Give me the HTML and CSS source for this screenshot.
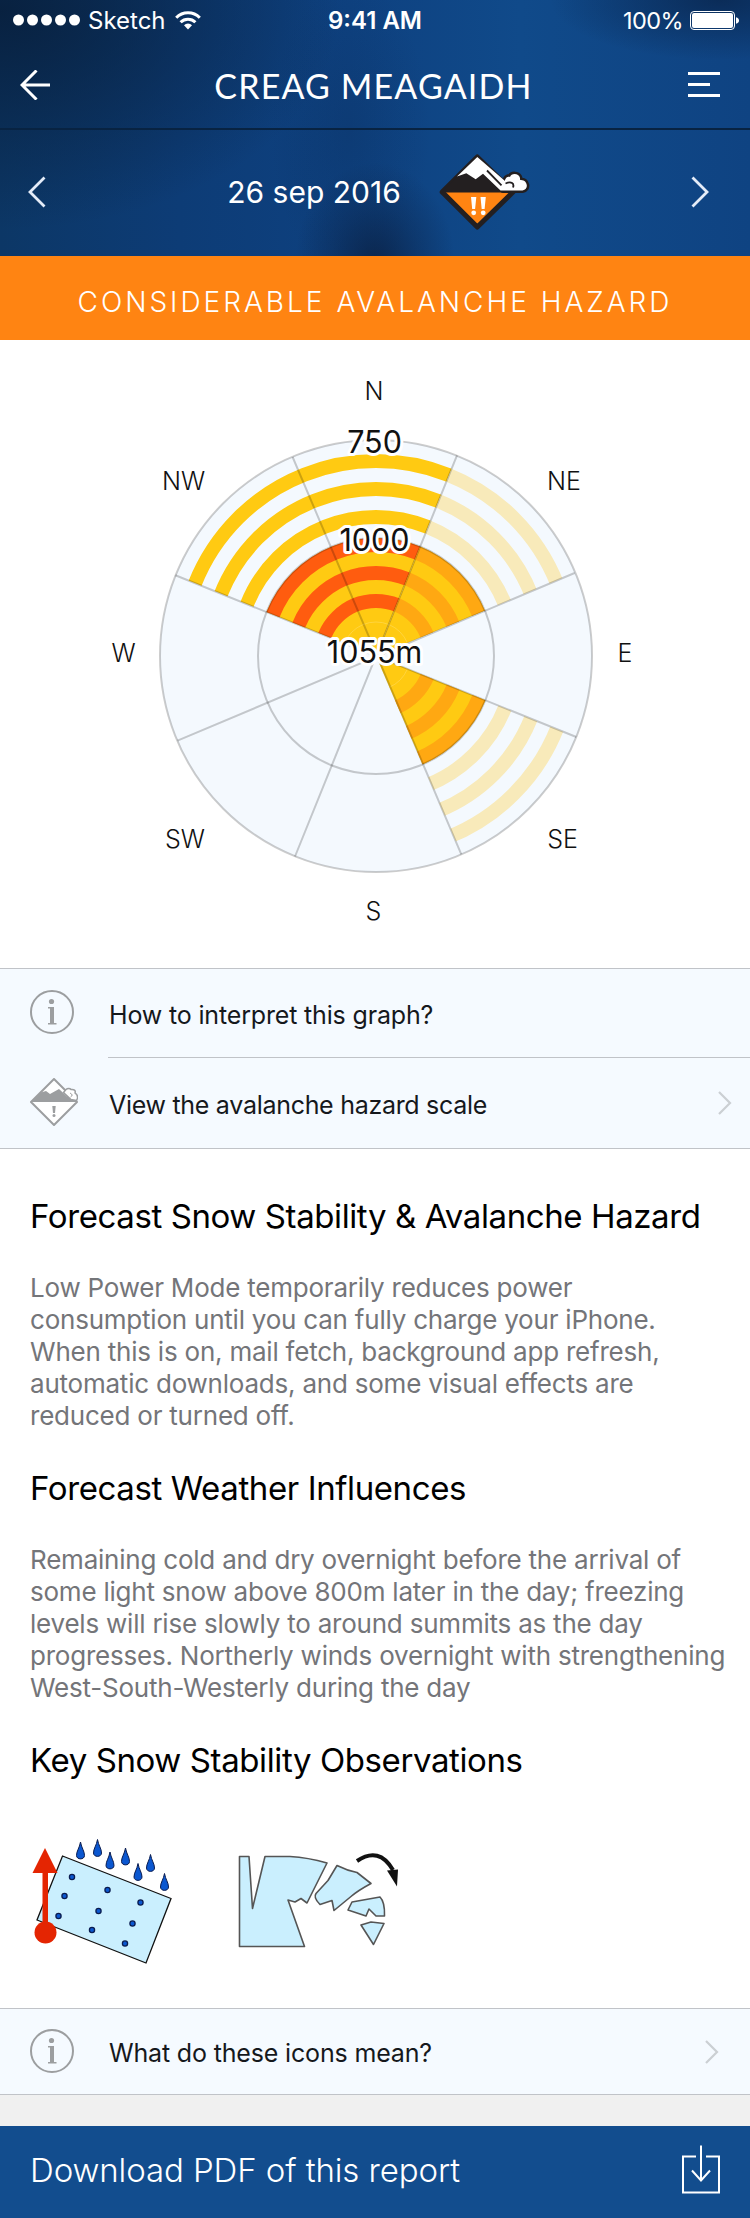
FILE: index.html
```html
<!DOCTYPE html>
<html lang="en">
<head>
<meta charset="utf-8">
<title>Creag Meagaidh</title>
<link rel="stylesheet" href="styles.css">
</head>
<body>
<div class="screen">
  <header class="top">
    <div class="status">
      <div class="status-side">
        <svg class="dots" width="68" height="16" viewBox="0 0 68 16" fill="#fff"><circle cx="5.500" cy="8" r="5.500"/><circle cx="19.500" cy="8" r="5.500"/><circle cx="33.500" cy="8" r="5.500"/><circle cx="47.500" cy="8" r="5.500"/><circle cx="61.500" cy="8" r="5.500"/></svg>
        <span class="carrier">Sketch</span>
        <svg class="wifi" width="26" height="19" viewBox="0 0 26 19"><g fill="none" stroke="#fff" stroke-width="3"><path d="M1.200 6.800a16.500 16.500 0 0 1 23.600 0"/><path d="M5.600 11.200a10.500 10.500 0 0 1 14.800 0"/></g><path d="M13 18.500l-4-4.300a5.800 5.800 0 0 1 8 0z" fill="#fff"/></svg>
      </div>
      <span class="clock">9:41 AM</span>
      <div class="status-side status-right">
        <span class="percent">100%</span>
        <svg class="battery" width="49" height="19" viewBox="0 0 49 19"><rect x=".5" y=".5" width="44" height="18" rx="3.500" fill="none" stroke="#fff"/><rect x="2" y="2" width="41" height="15" rx="2" fill="#fff"/><path d="M46 6.200q3 .8 3 3.300t-3 3.300z" fill="#fff"/></svg>
      </div>
    </div>
    <nav class="navbar">
      <svg width="30" height="30" viewBox="0 0 30 30" fill="none" stroke="#fff" stroke-width="3"><path d="M16.500 .5L2 15l14.500 14.500M2 15h28"/></svg>
      <h1 class="title">CREAG MEAGAIDH</h1>
      <svg width="32" height="26" viewBox="0 0 32 26" fill="#fff"><path d="M0 0h32v3H0zM0 11h22v3H0zM0 22h32v3H0z"/></svg>
    </nav>
    <div class="datebar">
      <svg class="prev" width="18" height="32" viewBox="0 0 18 32" fill="none" stroke="#e4ecf8" stroke-width="2.800"><path d="M16.500 1.500L2 16l14.500 14.500"/></svg>
      <div class="date">
        <span class="date-text">26 sep 2016</span>
        <svg class="hazard" width="92" height="78" viewBox="0 0 92 78" stroke-linejoin="round">
          <g stroke="#231f20" stroke-width="5">
            <path d="M38.300 3L74 38 38.300 73 3.200 38z" fill="#ff8412"/>
            <path d="M64 36.500L66 27c0-4 4-5 5-4 1-4 9-4 10 1 0 1.500 0 2 .5 2 7-.5 9 9.500 2 10.500z" fill="#fff"/>
          </g>
          <path d="M38.300 2.800L62 26l10 12.500H3.500v-1z" fill="#231f20"/>
          <path d="M38.300 3L18 22.500l9.300-3.200 9.400 6 7.300-5.600L61.500 36.500h22c7-1 5-11-2-10.500-.5 0-.5-.5-.5-2-1-5-9-5-10-1-1-1-5 0-5 4z" fill="#fff"/>
          <path d="M48 16.500l14.500 14.800M66.500 29.500c6-2.500 9 0 7.500 4" fill="none" stroke="#231f20" stroke-width="1.800"/>
          <path d="M32 43h5.300l-1.200 12h-2.900zM41.500 43h5.300l-1.200 12h-2.900z" fill="#fff"/><circle cx="34.700" cy="58.800" r="2.400" fill="#fff"/><circle cx="44.200" cy="58.800" r="2.400" fill="#fff"/>
        </svg>
      </div>
      <svg class="next" width="18" height="32" viewBox="0 0 18 32" fill="none" stroke="#e4ecf8" stroke-width="2.800"><path d="M1.500 1.500L16 16 1.500 30.500"/></svg>
    </div>
  </header>
  <div class="banner"><span class="banner-text">CONSIDERABLE AVALANCHE HAZARD</span></div>

  <svg class="rose" width="750" height="628" viewBox="0 340 750 628">
    <defs>
      <clipPath id="nwn"><path d="M376 656L175.400 575.300 150 400 376 400 457 455.400z"/></clipPath>
      <clipPath id="ne"><path d="M376 656L457 455.400 600 420 574.600 573z"/></clipPath>
      <clipPath id="se"><path d="M376 656L576.300 737 600 880 461.300 854.300z"/></clipPath>
    </defs>
    <circle cx="376" cy="656" r="216" fill="#f4f9fe"/>
    <g clip-path="url(#nwn)" fill="none" stroke-width="14">
      <circle cx="376" cy="656" r="118" fill="#ffca12"/>
      <g stroke="#ffca12"><circle cx="376" cy="656" r="195"/><circle cx="376" cy="656" r="167"/><circle cx="376" cy="656" r="139"/></g>
      <g stroke="#ff5c0f"><circle cx="376" cy="656" r="111"/><circle cx="376" cy="656" r="83"/><circle cx="376" cy="656" r="55"/></g>
      <circle cx="376" cy="656" r="34" stroke="#ffd952" stroke-width=".7"/>
    </g>
    <g clip-path="url(#ne)" fill="none" stroke-width="14">
      <circle cx="376" cy="656" r="118" fill="#ffca12"/>
      <g stroke="#f8eaba"><circle cx="376" cy="656" r="195"/><circle cx="376" cy="656" r="167"/><circle cx="376" cy="656" r="139"/></g>
      <g stroke="#ffa812"><circle cx="376" cy="656" r="111"/><circle cx="376" cy="656" r="83"/><circle cx="376" cy="656" r="55"/></g>
      <circle cx="376" cy="656" r="34" stroke="#ffd952" stroke-width=".7"/>
    </g>
    <g clip-path="url(#se)" fill="none" stroke-width="14">
      <circle cx="376" cy="656" r="118" fill="#ffca12"/>
      <g stroke="#f8eaba"><circle cx="376" cy="656" r="195"/><circle cx="376" cy="656" r="167"/><circle cx="376" cy="656" r="139"/></g>
      <g stroke="#ffa812"><circle cx="376" cy="656" r="111"/><circle cx="376" cy="656" r="83"/><circle cx="376" cy="656" r="55"/></g>
      <circle cx="376" cy="656" r="34" stroke="#ffd952" stroke-width=".7"/>
    </g>
    <g fill="none" stroke="#000" stroke-opacity=".2" stroke-width="2">
      <circle cx="376" cy="656" r="216"/><circle cx="376" cy="656" r="118"/>
      <path d="M292.600 457L461.300 854.300M457 455.400L295 856.500M574.600 573L177.500 740.700M175.400 575.300L576.300 737"/>
    </g>
    <g class="levels" text-anchor="middle">
      <text x="374.500" y="452.500">750</text>
      <text x="374.500" y="551">1000</text>
      <text x="374.500" y="662.500">1055m</text>
    </g>
    <g class="compass" text-anchor="middle">
      <text x="374" y="400">N</text><text x="183.500" y="490">NW</text><text x="564" y="490">NE</text>
      <text x="123.500" y="662">W</text><text x="625" y="662">E</text>
      <text x="185" y="848">SW</text><text x="562.500" y="848">SE</text><text x="373.500" y="920">S</text>
    </g>
  </svg>

  <div class="list">
    <div class="row row-first">
      <svg class="icon" width="44" height="44" viewBox="0 0 44 44"><circle cx="22" cy="22" r="21" fill="none" stroke="#9c9ea0" stroke-width="2"/><circle cx="21.500" cy="11.500" r="2.600" fill="#9c9ea0"/><path d="M18 17h6v16h2.500v1.500h-8.500v-1.500h2v-14.500h-2z" fill="#9c9ea0"/></svg>
      <span class="row-text">How to interpret this graph?</span>
    </div>
    <div class="divider"></div>
    <div class="row row-second">
      <svg class="icon icon-scale" width="48" height="48" viewBox="0 0 48 48"><path d="M24 1L47 24 24 47 1 24z" fill="#fff" stroke="#9c9ea0" stroke-width="2" stroke-linejoin="round"/><path d="M1.500 24L11 14.500l5-1.500 4 3L29 11l8 7.500 9 3.500v2H1.500z" fill="#9c9ea0"/><path d="M33.500 14.500l2.500-3c1.500-1.500 4-1.500 5 0 3-.5 5 1 4 3.500 3 2 3 5 1.500 7.500l-5.500-1z" fill="#fff" stroke="#9c9ea0" stroke-width="1.500"/><path d="M40 15q4 2 .5 4" fill="none" stroke="#9c9ea0"/><path d="M22.300 28h3.400l-.7 7h-2z" fill="#9c9ea0"/><circle cx="24" cy="37.500" r="1.500" fill="#9c9ea0"/></svg>
      <span class="row-text tight">View the avalanche hazard scale</span>
      <svg class="chev" width="14" height="24" viewBox="0 0 14 24" fill="none" stroke="#cbcfd3" stroke-width="2.200"><path d="M1 1l11 11L1 23"/></svg>
    </div>
  </div>

  <main class="report">
    <h2 class="heading h-a">Forecast Snow Stability &amp; Avalanche Hazard</h2>
    <p class="copy">Low Power Mode temporarily reduces power<br>consumption until you can fully charge your iPhone.<br>When this is on, mail fetch, background app refresh,<br>automatic downloads, and some visual effects are<br>reduced or turned off.</p>
    <h2 class="heading">Forecast Weather Influences</h2>
    <p class="copy">Remaining cold and dry overnight before the arrival of<br>some light snow above 800m later in the day; freezing<br>levels will rise slowly to around summits as the day<br>progresses. Northerly winds overnight with strengthening<br>West-South-Westerly during the day</p>
    <h2 class="heading">Key Snow Stability Observations</h2>
    <svg class="signs" width="400" height="140" viewBox="30 1830 400 140">
      <path d="M62.500 1856L171 1898.500 146 1963 37 1920z" fill="#caeffe" stroke="#111" stroke-width="1.300"/>
      <g fill="#0b57d0" stroke="#0a1c50">
        <path id="drop" d="M80.500 1842c1 6 4 9 4 13.500s-8 4.500-8 0 3-7.500 4-13.500z"/>
        <use href="#drop" x="17" y="-2.500"/><use href="#drop" x="29.500" y="10"/><use href="#drop" x="45" y="6"/><use href="#drop" x="57.500" y="21.500"/><use href="#drop" x="70" y="12.500"/><use href="#drop" x="84" y="31.500"/>
        <g stroke-width="1.300"><circle cx="72" cy="1877" r="2.600"/><circle cx="107.500" cy="1890" r="2.600"/><circle cx="64.500" cy="1896" r="2.600"/><circle cx="140.500" cy="1902.500" r="2.600"/><circle cx="98.500" cy="1911" r="2.600"/><circle cx="58.500" cy="1916" r="2.600"/><circle cx="132.500" cy="1923.500" r="2.600"/><circle cx="92" cy="1930" r="2.600"/><circle cx="125" cy="1943.500" r="2.600"/></g>
      </g>
      <path d="M45 1848l12.500 25H48v50h-5.500v-50H32.500z" fill="#e42502"/><circle cx="45.500" cy="1932.500" r="11" fill="#e42502"/>
      <g fill="#caeffe" stroke="#555" stroke-width="1.600" stroke-linejoin="round">
        <path d="M239.500 1856.500h9.500l3.500 52 12.500-52h25q18 1 37 6.500l-20 40-6-4.500-6 3.500-7-2 16.500 46.500h-65z"/>
        <path d="M337 1865.500q10 5 20 7l14 11q-13 7-20 13l-17 14-2-10-12 4q-7-7-4-11l12-13z"/>
        <path d="M352 1902l28-5q5 5 4.500 19h-8.500l-7-7-3 7-18-6z"/>
        <path d="M361 1925l10-3 13 1.500-10.500 21z"/>
      </g>
      <path d="M357 1861q22-15 36 9" fill="none" stroke="#111" stroke-width="4"/><path d="M387 1870.500l11-1-1 17z" fill="#111"/>
    </svg>
  </main>

  <div class="list">
    <div class="row row-icons">
      <svg class="icon" width="44" height="44" viewBox="0 0 44 44"><circle cx="22" cy="22" r="21" fill="none" stroke="#9c9ea0" stroke-width="2"/><circle cx="21.500" cy="11.500" r="2.600" fill="#9c9ea0"/><path d="M18 17h6v16h2.500v1.500h-8.500v-1.500h2v-14.500h-2z" fill="#9c9ea0"/></svg>
      <span class="row-text">What do these icons mean?</span>
      <svg class="chev" width="14" height="24" viewBox="0 0 14 24" fill="none" stroke="#cbcfd3" stroke-width="2.200"><path d="M1 1l11 11L1 23"/></svg>
    </div>
  </div>
  <div class="gap"></div>
  <footer class="download">
    <span class="download-text">Download PDF of this report</span>
    <svg width="38" height="50" viewBox="0 0 38 50" fill="none" stroke="#fff" stroke-width="2"><path d="M14 11.500H1v36h36v-36H24M19 .5v35M10 25.500l9 10 9-10"/></svg>
  </footer>
</div>
</body>
</html>
```
FILE: styles.css
```css
* { box-sizing: border-box; }
body { margin: 0; background: #fff; font-family: Inter, "Liberation Sans", sans-serif; }
svg { display: block; flex: none; }
h1, h2, p { margin: 0; font-weight: 400; }
span, h1, h2 { white-space: nowrap; }
.screen { width: 750px; height: 2218px; display: flex; flex-direction: column; overflow: hidden; }

.top {
  height: 256px; color: #fff; flex: none;
  background:
    radial-gradient(ellipse 80px 100px at 375px 262px, rgba(10, 34, 70, .85), rgba(10, 34, 70, .35) 55%, rgba(10, 34, 70, 0)),
    radial-gradient(ellipse 80px 150px at 350px 130px, rgba(10, 42, 84, .25), rgba(10, 42, 84, 0)),
    radial-gradient(ellipse 170px 60px at 720px 0, rgba(9, 36, 74, .75), rgba(9, 36, 74, 0)),
    radial-gradient(ellipse 340px 220px at 0 10px, rgba(8, 32, 62, .95), rgba(8, 32, 62, 0)),
    linear-gradient(90deg, #0c3766 0, #0d3c76 180px, #0e4180 350px, #104a8a 520px, #0f4382 750px);
}
.status { height: 40px; display: flex; align-items: center; font-size: 24px; padding: 0 11px 0 13px; }
.status-side { flex: 1; display: flex; align-items: center; }
.status-right { justify-content: flex-end; }
.carrier { margin: 0 9px 0 7px; }
.clock { font-weight: 600; margin-right: 2px; }
.percent { margin-right: 7px; font-size: 23.500px; letter-spacing: -.6px; }
.navbar { height: 90px; border-bottom: 2px solid #082342; display: flex; align-items: center; justify-content: space-between; padding: 2px 30px 0 20px; }
.title { font-family: Lato, sans-serif; font-size: 34px; letter-spacing: 1.150px; margin-left: 9px; }
.datebar { height: 126px; display: flex; align-items: center; justify-content: space-between; padding: 0 41px 3px 28px; }
.date { display: flex; align-items: center; gap: 38px; margin-left: 21px; }
.date-text { font-size: 30px; }
.hazard { margin-top: 3px; }

.banner { height: 84px; flex: none; background: #ff8412; color: #fff; display: flex; align-items: center; justify-content: center; padding-top: 8px; }
.banner-text { font-size: 28px; font-weight: 300; letter-spacing: 3px; }

.levels text { font-size: 30.500px; fill: #111; stroke: #fff; stroke-width: 6px; paint-order: stroke; stroke-linejoin: round; }
.compass text { font-size: 25px; font-weight: 300; fill: #111; }

.list { flex: none; background: #f5faff; border-top: 1px solid #c0c3c8; border-bottom: 1px solid #c0c3c8; color: #15181c; }
.row { display: flex; align-items: center; padding-left: 30px; }
.row-text { font-size: 25px; flex: 1; padding-top: 3px; letter-spacing: -.16px; }
.tight { letter-spacing: -.29px; }
.row-first { height: 88px; }
.row-second { height: 90px; padding-right: 18px; }
.divider { height: 1px; margin-left: 108px; background: #c0c3c8; }
.icon { margin: -2px 35px 0 0; }
.icon-scale { margin-right: 31px; }

.report { height: 859px; flex: none; padding-left: 30px; }
.heading { font-size: 33px; line-height: 40px; letter-spacing: -.4px; color: #000; margin-top: 36px; }
.h-a { margin-top: 47px; }
.copy { font-size: 26px; line-height: 32px; letter-spacing: -.22px; color: #747579; margin-top: 36px; }
.signs { margin-top: 50px; }

.row-icons { height: 85px; padding-right: 31px; }
.gap { height: 31px; flex: none; background: #f0f0f0; }
.download { flex: 1; background: #124d8e; color: #fff; display: flex; align-items: center; justify-content: space-between; padding: 0 30px 5px; }
.download-text { font-size: 33px; font-weight: 300; letter-spacing: -.1px; }
```
